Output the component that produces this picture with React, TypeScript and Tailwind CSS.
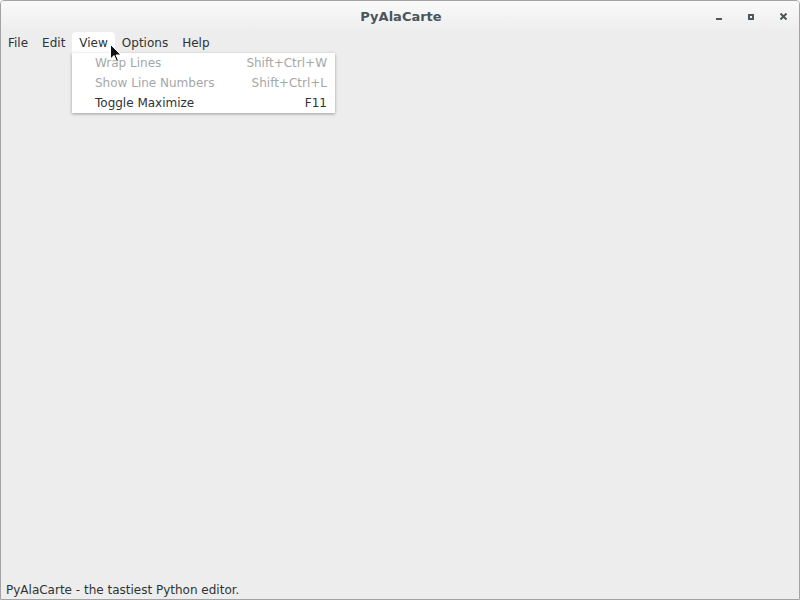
import React from 'react';

const font = { fontFamily: '"DejaVu Sans", "Noto Sans", sans-serif' };

const menus = ['File', 'Edit', 'View', 'Options', 'Help'];

const viewItems = [
  { label: 'Wrap Lines', shortcut: 'Shift+Ctrl+W', disabled: true },
  { label: 'Show Line Numbers', shortcut: 'Shift+Ctrl+L', disabled: true },
  { label: 'Toggle Maximize', shortcut: 'F11', disabled: false },
];

const App = () => {
  return (
    <div
      className="w-[800px] h-[600px] flex flex-col bg-[#ededed] border border-[#a3a3a3] rounded-tl-[4px] rounded-tr-[4px] overflow-hidden text-[12px] text-[#2e3436]"
      style={font}
    >
      {/* title bar */}
      <div className="h-[31px] shrink-0 relative flex items-center justify-center bg-gradient-to-b from-[#fafafa] to-[#ededed]">
        <span className="font-bold text-[#4a5559] text-[13px] ml-[2px]">PyAlaCarte</span>
        <div className="absolute right-0 top-0 h-full flex items-center">
          <div className="w-[32px] flex justify-center">
            <div className="w-[6px] h-[2px] mt-[5px] bg-[#4c585d]" />
          </div>
          <div className="w-[32px] flex justify-center">
            <div className="w-[6px] h-[6px] border-2 border-[#4c585d]" />
          </div>
          <div className="w-[32px] flex justify-center">
            <svg width="7" height="7" viewBox="0 0 7 7">
              <path d="M0.5 0.5 L6.5 6.5 M6.5 0.5 L0.5 6.5" stroke="#4c585d" strokeWidth="2" />
            </svg>
          </div>
        </div>
      </div>

      {/* menu bar */}
      <div className="relative h-[21px] shrink-0 flex items-stretch">
        {menus.map((m) => (
          <div
            key={m}
            className={`px-[7px] flex items-center ${m === 'View' ? 'bg-white rounded-t-[4px]' : ''}`}
          >
            {m}
          </div>
        ))}

        {/* dropdown */}
        <div className="absolute left-[71px] top-[21px] w-[263px] bg-white shadow-[0_1px_3px_rgba(0,0,0,0.35)] z-10">
          {viewItems.map((it) => (
            <div
              key={it.label}
              className={`h-[20px] flex items-center justify-between pl-[23px] pr-[8px] ${
                it.disabled ? 'text-[#a5a8a9]' : 'text-[#2e3436]'
              }`}
            >
              <span>{it.label}</span>
              <span>{it.shortcut}</span>
            </div>
          ))}
        </div>

        {/* mouse pointer */}
        <svg className="absolute left-[109px] top-[12px] z-20" width="12" height="19" viewBox="0 0 12 19">
          <path d="M0.5 0.5 L0.5 15 L4 11.5 L6.5 17.5 L8.5 16.5 L6 11 L11 11 Z" fill="#111" stroke="#fff" strokeWidth="1" />
        </svg>
      </div>

      {/* editor area */}
      <div className="flex-1" />

      {/* status bar */}
      <div className="h-[19px] shrink-0 flex items-center pl-[5px] text-[#2e3436]">
        PyAlaCarte - the tastiest Python editor.
      </div>
    </div>
  );
};

export default App;
